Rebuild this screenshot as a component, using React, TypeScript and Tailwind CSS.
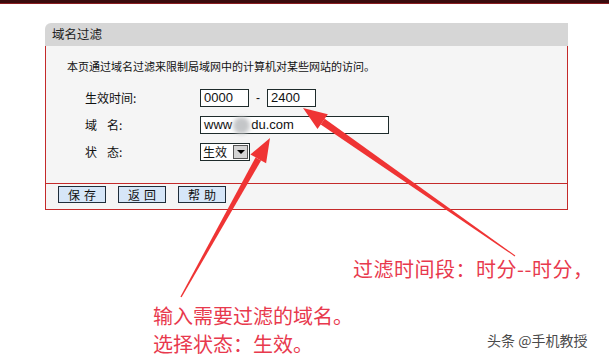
import React from "react";

const cjk = { fontFamily: '"Noto Sans CJK SC", "Noto Sans", sans-serif' };
const latin = { fontFamily: '"Liberation Sans", "Noto Sans CJK SC", sans-serif' };

function Arrows() {
  return (
    <svg
      className="absolute left-0 top-0 pointer-events-none"
      width={609}
      height={364}
      viewBox="0 0 609 364"
    >
      {/* to the end-time box */}
      <polygon points="303,108 317.5,129.1 322.7,121.7 327.8,114.3" fill="#ef3434" />
      <polygon points="320.7,124.6 324.7,118.8 515.3,255.6 514.7,256.4" fill="#ef3434" />
      {/* to the domain box */}
      <polygon points="270,138 250.4,154.5 258.3,158.9 266.1,163.3" fill="#ef3434" />
      <polygon points="255.5,157.4 261.1,160.4 181.6,297.3 180.4,296.7" fill="#ef3434" />
    </svg>
  );
}

function Btn({ label }: { label: string }) {
  return (
    <button
      className="w-[48px] h-[17px] bg-[#d6e6f8] border border-[#1f2d3a] text-[12px] leading-none text-[#111] tracking-[4px] pl-[4px] flex items-center justify-center"
      style={cjk}
    >
      {label}
    </button>
  );
}

function Label({ a, b }: { a: string; b?: string }) {
  return (
    <div className="w-[154px] pl-[39px] flex">
      {b ? (
        <>
          <span>{a}</span>
          <span className="ml-[10px]">{b}</span>
        </>
      ) : (
        <span>{a}</span>
      )}
    </div>
  );
}

export default function App() {
  return (
    <div className="relative w-[609px] h-[364px] bg-white overflow-hidden">
      <div className="h-[4px] bg-[#3a0b0e] border-b border-[#8a1c20]" />

      <div className="ml-[45px] mt-[19px] w-[523px]">
        <div
          className="h-[23px] bg-[#d6d6d6] rounded-tl-[6px] flex items-center px-[7px] text-[12.5px] text-[#222]"
          style={cjk}
        >
          域名过滤
        </div>

        <div className="bg-[#f5f5f5] border-x border-b border-[#c42a2a]">
          <div className="pt-[12px] pb-[22px] text-[#111]" style={cjk}>
            <div className="pl-[21px] text-[11px] leading-[16px]">
              本页通过域名过滤来限制局域网中的计算机对某些网站的访问。
            </div>

            <div className="mt-[15px] flex flex-col gap-[9px] text-[12px]">
              <div className="flex items-center h-[18px]">
                <Label a="生效时间:" />
                <div
                  className="w-[49px] h-[18px] border border-[#1e2b2b] bg-white px-[3px] text-[13px] leading-[16px]"
                  style={latin}
                >
                  0000
                </div>
                <div className="w-[18px] text-center" style={latin}>
                  -
                </div>
                <div
                  className="w-[49px] h-[18px] border border-[#1e2b2b] bg-white px-[3px] text-[13px] leading-[16px]"
                  style={latin}
                >
                  2400
                </div>
              </div>

              <div className="flex items-center h-[18px]">
                <Label a="域" b="名:" />
                <div
                  className="w-[189px] h-[18px] border border-[#1e2b2b] bg-white px-[3px] text-[13px] leading-[16px] flex items-center"
                  style={latin}
                >
                  <span>www</span>
                  <span className="inline-block w-[17px] h-[17px] rounded-full bg-[#c4c6c8] blur-[2px] mx-[1px]" />
                  <span>du.com</span>
                </div>
              </div>

              <div className="flex items-center h-[18px]">
                <Label a="状" b="态:" />
                <div className="w-[50px] h-[18px] border border-[#1e2b2b] bg-white flex items-center">
                  <span className="flex-1 pl-[2px] text-[12px] leading-[16px]">生效</span>
                  <span className="w-[15px] h-[14px] mr-[1px] bg-[#d4d4d4] border border-[#555] flex items-center justify-center">
                    <span className="w-0 h-0 border-l-[4px] border-r-[4px] border-t-[4px] border-l-transparent border-r-transparent border-t-black" />
                  </span>
                </div>
              </div>
            </div>
          </div>

          <div className="border-t border-[#c42a2a] h-[26px] pt-[2px] pl-[12px] flex gap-[12px]">
            <Btn label="保存" />
            <Btn label="返回" />
            <Btn label="帮助" />
          </div>
        </div>
      </div>

      <div
        className="mt-[45px] ml-[353px] text-[20px] leading-[28px] tracking-[0.5px] text-[#e8394d]"
        style={cjk}
      >
        过滤时间段：时分--时分，
      </div>
      <div className="mt-[19px] ml-[153px] text-[20px] leading-[28px] text-[#e8394d]" style={cjk}>
        <div>输入需要过滤的域名。</div>
        <div>选择状态：生效。</div>
      </div>

      <div
        className="absolute left-[487px] top-[331px] text-[14px] leading-[18px] text-[#4a4a4a] [text-shadow:0_0_2px_#fff]"
        style={cjk}
      >
        头条 @手机教授
      </div>

      <Arrows />
    </div>
  );
}
